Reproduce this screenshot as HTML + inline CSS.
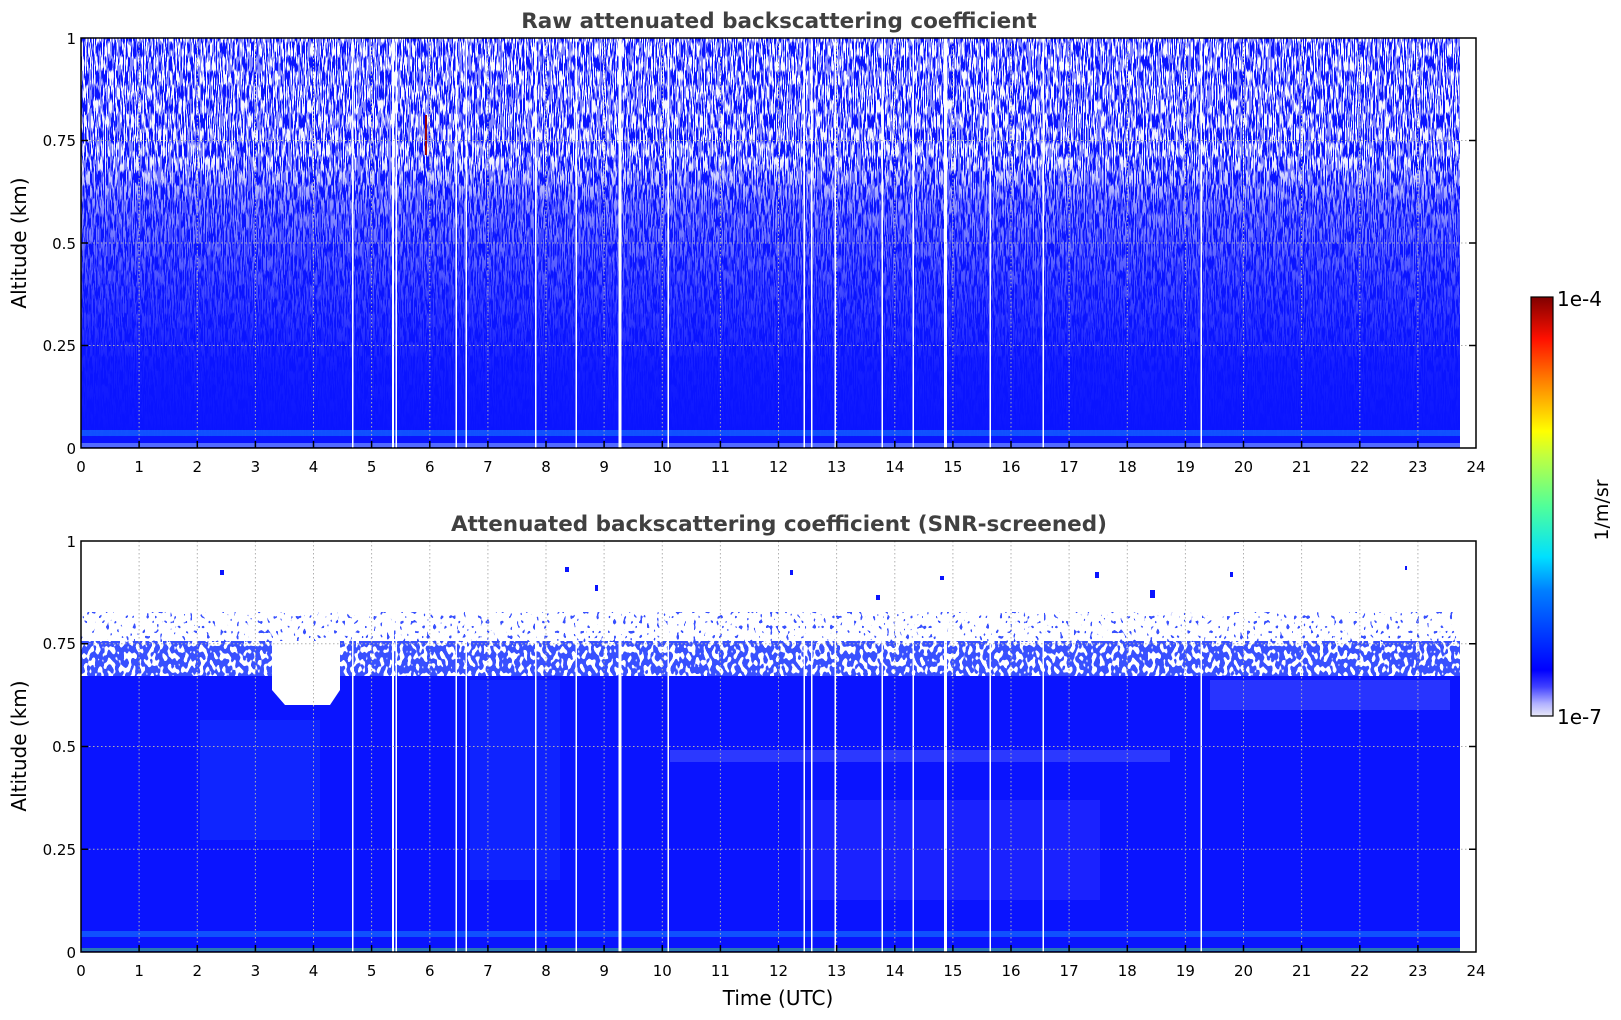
<!DOCTYPE html>
<html><head><meta charset="utf-8"><style>
html,body{margin:0;padding:0;background:#fff;}
svg{display:block;font-family:"DejaVu Sans","Liberation Sans",sans-serif;}
</style></head><body>
<svg width="1621" height="1020" viewBox="0 0 1621 1020" xmlns="http://www.w3.org/2000/svg">
<defs>
<filter id="spk" x="0" y="0" width="100%" height="100%">
<feTurbulence type="fractalNoise" baseFrequency="0.9 0.07" numOctaves="1" seed="3"/>
<feColorMatrix values="0 0 0 0 1  0 0 0 0 1  0 0 0 0 1  18 0 0 0 -8.6"/>
</filter>
<filter id="bl1" x="0" y="0" width="100%" height="100%">
<feTurbulence type="fractalNoise" baseFrequency="0.25 0.15" numOctaves="1" seed="7"/>
<feColorMatrix values="0 0 0 0 0.04  0 0 0 0 0.08  0 0 0 0 1  30 0 0 0 -13.5"/>
</filter>
<filter id="bl2" x="0" y="0" width="100%" height="100%">
<feTurbulence type="fractalNoise" baseFrequency="0.3 0.2" numOctaves="1" seed="11"/>
<feColorMatrix values="0 0 0 0 0.04  0 0 0 0 0.08  0 0 0 0 1  30 0 0 0 -19.5"/>
</filter>
<linearGradient id="m1" x1="0" y1="0" x2="0" y2="1">
<stop offset="0" stop-color="#fff" stop-opacity="1"/>
<stop offset="0.3" stop-color="#fff" stop-opacity="0.95"/>
<stop offset="0.4" stop-color="#fff" stop-opacity="0.55"/>
<stop offset="0.6" stop-color="#fff" stop-opacity="0.25"/>
<stop offset="0.8" stop-color="#fff" stop-opacity="0.05"/>
<stop offset="1" stop-color="#fff" stop-opacity="0"/>
</linearGradient>
<mask id="mk1"><rect x="81" y="38" width="1379" height="410" fill="url(#m1)"/></mask>
<linearGradient id="cb" x1="0" y1="1" x2="0" y2="0">
<stop offset="0" stop-color="#e8e8f8"/>
<stop offset="0.03" stop-color="#b0b0ff"/>
<stop offset="0.07" stop-color="#4040ff"/>
<stop offset="0.11" stop-color="#0000ff"/>
<stop offset="0.3" stop-color="#0080ff"/>
<stop offset="0.38" stop-color="#00e0ff"/>
<stop offset="0.5" stop-color="#50ff9a"/>
<stop offset="0.62" stop-color="#c0ff40"/>
<stop offset="0.68" stop-color="#ffff00"/>
<stop offset="0.8" stop-color="#ff8000"/>
<stop offset="0.9" stop-color="#ff1000"/>
<stop offset="1" stop-color="#800000"/>
</linearGradient>
</defs>

<!-- Panel 1 -->
<rect x="81" y="38" width="1379" height="410" fill="#0a14ff"/>
<rect x="81" y="430" width="1379" height="6" fill="#1050ff"/>
<rect x="81" y="443" width="1379" height="4" fill="#7090ff" opacity="0.7"/>
<rect x="81" y="38" width="1379" height="410" filter="url(#spk)" mask="url(#mk1)"/>
<g fill="#fff">
<rect x="352" y="38" width="1.5" height="410"/><rect x="392" y="38" width="2" height="410"/><rect x="395.5" y="38" width="1.5" height="410"/>
<rect x="455.5" y="38" width="1.5" height="410"/><rect x="465.5" y="38" width="1.5" height="410"/><rect x="535" y="38" width="1.5" height="410"/>
<rect x="575.5" y="38" width="1.5" height="410"/><rect x="618.5" y="38" width="3" height="410"/><rect x="667.5" y="38" width="1.5" height="410"/>
<rect x="803.5" y="38" width="1.5" height="410"/><rect x="811" y="38" width="1.5" height="410"/><rect x="834.5" y="38" width="1.5" height="410"/>
<rect x="881.5" y="38" width="1.5" height="410"/><rect x="912.5" y="38" width="1.5" height="410"/><rect x="944" y="38" width="3" height="410"/>
<rect x="989.5" y="38" width="1.5" height="410"/><rect x="1042.5" y="38" width="1.5" height="410"/><rect x="1200.5" y="38" width="1.5" height="410"/>
</g>
<rect x="425" y="115" width="2" height="40" fill="#a00000"/>
<rect x="1460" y="38" width="16" height="410" fill="#fff"/>

<!-- Panel 2 -->
<rect x="81" y="641" width="1379" height="37" filter="url(#bl1)"/>
<rect x="81" y="612" width="1379" height="30" filter="url(#bl2)"/>
<rect x="81" y="676" width="1379" height="276" fill="#0a14ff"/>
<path d="M272,641 L272,690 L285,705 L330,705 L340,690 L340,641 Z" fill="#fff"/>
<rect x="200" y="720" width="120" height="120" fill="#1e50ff" opacity="0.3"/>
<rect x="470" y="680" width="90" height="200" fill="#1e50ff" opacity="0.25"/>
<rect x="670" y="750" width="500" height="12" fill="#6070ff" opacity="0.4"/>
<rect x="1210" y="680" width="240" height="30" fill="#6070ff" opacity="0.35"/>
<rect x="800" y="800" width="300" height="100" fill="#2a30ff" opacity="0.5"/>
<rect x="81" y="931" width="1379" height="6" fill="#1050ff"/>
<rect x="81" y="948" width="1379" height="3" fill="#40c080" opacity="0.6"/>
<g fill="#fff">
<rect x="352" y="541" width="1.5" height="411"/><rect x="392" y="541" width="2" height="411"/><rect x="395.5" y="541" width="1.5" height="411"/>
<rect x="455.5" y="541" width="1.5" height="411"/><rect x="465.5" y="541" width="1.5" height="411"/><rect x="535" y="541" width="1.5" height="411"/>
<rect x="575.5" y="541" width="1.5" height="411"/><rect x="618.5" y="541" width="3" height="411"/><rect x="667.5" y="541" width="1.5" height="411"/>
<rect x="803.5" y="541" width="1.5" height="411"/><rect x="811" y="541" width="1.5" height="411"/><rect x="834.5" y="541" width="1.5" height="411"/>
<rect x="881.5" y="541" width="1.5" height="411"/><rect x="912.5" y="541" width="1.5" height="411"/><rect x="944" y="541" width="3" height="411"/>
<rect x="989.5" y="541" width="1.5" height="411"/><rect x="1042.5" y="541" width="1.5" height="411"/><rect x="1200.5" y="541" width="1.5" height="411"/>
<rect x="1460" y="541" width="16" height="411"/>
</g>
<g fill="#0a14ff">
<rect x="220" y="570" width="4" height="5"/><rect x="565" y="567" width="4" height="5"/>
<rect x="1150" y="590" width="5" height="8"/><rect x="1095" y="572" width="4" height="6"/><rect x="876" y="595" width="4" height="5"/>
<rect x="790" y="570" width="3" height="5"/><rect x="940" y="576" width="4" height="4"/><rect x="595" y="585" width="3" height="6"/>
<rect x="1230" y="572" width="3" height="5"/><rect x="1405" y="566" width="2" height="4"/>
</g>

<!-- grid -->
<g stroke="#b0b0b0" stroke-width="1" stroke-dasharray="1.5,2.5">
<path d="M139.1,38V448M197.3,38V448M255.4,38V448M313.5,38V448M371.6,38V448M429.8,38V448M487.9,38V448M546,38V448M604.1,38V448M662.3,38V448M720.4,38V448M778.5,38V448M836.6,38V448M894.8,38V448M952.9,38V448M1011,38V448M1069.1,38V448M1127.3,38V448M1185.4,38V448M1243.5,38V448M1301.6,38V448M1359.8,38V448M1417.9,38V448"/>
<path d="M81,140.5H1476M81,243H1476M81,345.5H1476"/>
<path d="M139.1,541V952M197.3,541V952M255.4,541V952M313.5,541V952M371.6,541V952M429.8,541V952M487.9,541V952M546,541V952M604.1,541V952M662.3,541V952M720.4,541V952M778.5,541V952M836.6,541V952M894.8,541V952M952.9,541V952M1011,541V952M1069.1,541V952M1127.3,541V952M1185.4,541V952M1243.5,541V952M1301.6,541V952M1359.8,541V952M1417.9,541V952"/>
<path d="M81,643.75H1476M81,746.5H1476M81,849.25H1476"/>
</g>

<!-- axes -->
<g fill="none" stroke="#000" stroke-width="1.5">
<rect x="81" y="38" width="1395" height="410"/>
<rect x="81" y="541" width="1395" height="411"/>
<path d="M81,140.5h7M81,243h7M81,345.5h7M1476,140.5h-7M1476,243h-7M1476,345.5h-7"/>
<path d="M81,643.75h7M81,746.5h7M81,849.25h7M1476,643.75h-7M1476,746.5h-7M1476,849.25h-7"/>
<path d="M139.1,448v-7M197.3,448v-7M255.4,448v-7M313.5,448v-7M371.6,448v-7M429.8,448v-7M487.9,448v-7M546,448v-7M604.1,448v-7M662.3,448v-7M720.4,448v-7M778.5,448v-7M836.6,448v-7M894.8,448v-7M952.9,448v-7M1011,448v-7M1069.1,448v-7M1127.3,448v-7M1185.4,448v-7M1243.5,448v-7M1301.6,448v-7M1359.8,448v-7M1417.9,448v-7"/>
<path d="M139.1,952v-7M197.3,952v-7M255.4,952v-7M313.5,952v-7M371.6,952v-7M429.8,952v-7M487.9,952v-7M546,952v-7M604.1,952v-7M662.3,952v-7M720.4,952v-7M778.5,952v-7M836.6,952v-7M894.8,952v-7M952.9,952v-7M1011,952v-7M1069.1,952v-7M1127.3,952v-7M1185.4,952v-7M1243.5,952v-7M1301.6,952v-7M1359.8,952v-7M1417.9,952v-7"/>
</g>

<g font-size="15" fill="#000">
<g text-anchor="end">
<text x="76" y="44">1</text><text x="76" y="146">0.75</text><text x="76" y="249">0.5</text><text x="76" y="351">0.25</text><text x="76" y="454">0</text>
<text x="76" y="547">1</text><text x="76" y="649">0.75</text><text x="76" y="752">0.5</text><text x="76" y="855">0.25</text><text x="76" y="958">0</text>
</g>
<g text-anchor="middle">
<text x="81" y="472">0</text><text x="139.1" y="472">1</text><text x="197.3" y="472">2</text><text x="255.4" y="472">3</text><text x="313.5" y="472">4</text><text x="371.6" y="472">5</text><text x="429.8" y="472">6</text><text x="487.9" y="472">7</text><text x="546" y="472">8</text><text x="604.1" y="472">9</text><text x="662.3" y="472">10</text><text x="720.4" y="472">11</text><text x="778.5" y="472">12</text><text x="836.6" y="472">13</text><text x="894.8" y="472">14</text><text x="952.9" y="472">15</text><text x="1011" y="472">16</text><text x="1069.1" y="472">17</text><text x="1127.3" y="472">18</text><text x="1185.4" y="472">19</text><text x="1243.5" y="472">20</text><text x="1301.6" y="472">21</text><text x="1359.8" y="472">22</text><text x="1417.9" y="472">23</text><text x="1476" y="472">24</text>
<text x="81" y="976">0</text><text x="139.1" y="976">1</text><text x="197.3" y="976">2</text><text x="255.4" y="976">3</text><text x="313.5" y="976">4</text><text x="371.6" y="976">5</text><text x="429.8" y="976">6</text><text x="487.9" y="976">7</text><text x="546" y="976">8</text><text x="604.1" y="976">9</text><text x="662.3" y="976">10</text><text x="720.4" y="976">11</text><text x="778.5" y="976">12</text><text x="836.6" y="976">13</text><text x="894.8" y="976">14</text><text x="952.9" y="976">15</text><text x="1011" y="976">16</text><text x="1069.1" y="976">17</text><text x="1127.3" y="976">18</text><text x="1185.4" y="976">19</text><text x="1243.5" y="976">20</text><text x="1301.6" y="976">21</text><text x="1359.8" y="976">22</text><text x="1417.9" y="976">23</text><text x="1476" y="976">24</text>
</g>
</g>
<g font-size="20" text-anchor="middle" fill="#000">
<text x="0" y="0" transform="translate(26,243) rotate(-90)">Altitude (km)</text>
<text x="0" y="0" transform="translate(26,746) rotate(-90)">Altitude (km)</text>
<text x="778" y="1005">Time (UTC)</text>
</g>
<g font-size="21.5" font-weight="bold" text-anchor="middle" fill="#404040">
<text x="779" y="28">Raw attenuated backscattering coefficient</text>
<text x="779" y="531">Attenuated backscattering coefficient (SNR-screened)</text>
</g>

<!-- colorbar -->
<rect x="1531" y="297" width="22" height="419" fill="url(#cb)" stroke="#000" stroke-width="1.2"/>
<g font-size="20" fill="#000">
<text x="1557" y="306">1e-4</text>
<text x="1557" y="724">1e-7</text>
<text x="0" y="0" transform="translate(1608,510) rotate(-90)" text-anchor="middle" font-size="19">1/m/sr</text>
</g>
</svg>
</body></html>
